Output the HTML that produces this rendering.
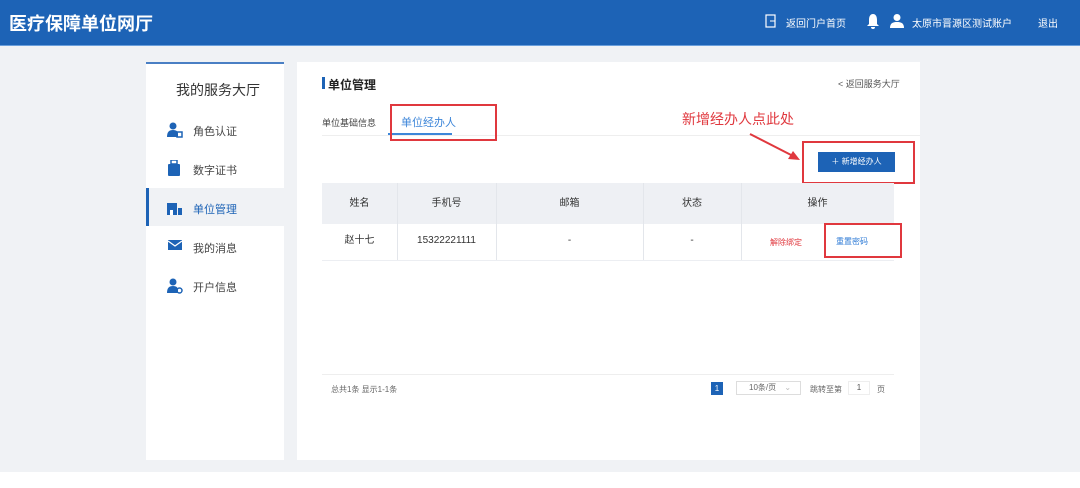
<!DOCTYPE html>
<html><head><meta charset="utf-8"><style>
*{margin:0;padding:0;box-sizing:border-box}
body{width:1080px;height:488px;background:#f0f2f5;font-family:"Liberation Sans","Noto Sans CJK SC",sans-serif;position:relative;overflow:hidden;color:#333}
.abs{position:absolute}
.hdr{left:0;top:0;width:1080px;height:46px;background:#1d63b6;border-bottom:1px solid #6a9fdc}
.t{white-space:nowrap}
.side{left:146px;top:62px;width:138px;height:398px;background:#fff;border-top:2px solid #4a7fc4}
.main{left:297px;top:62px;width:623px;height:398px;background:#fff}
.red{border:2px solid #e0383e}
.cell{position:absolute;font-size:10px;text-align:center;line-height:12px;height:12px}
</style></head><body>
<div class="abs hdr"></div>
<div class="abs t" style="left:9px;top:10px;font-size:18px;font-weight:bold;color:#fff">医疗保障单位网厅</div>
<svg class="abs" style="left:765px;top:14px" width="12" height="14"><rect x="1" y="1" width="9" height="12" fill="none" stroke="#fff" stroke-width="1.2"/><path d="M5 7h5" stroke="#fff"/></svg>
<div class="abs t" style="left:786px;top:15px;font-size:10px;color:#fff">返回门户首页</div>
<svg class="abs" style="left:866px;top:13px" width="14" height="16"><path d="M7 1C4 1 3 4 3 7v4L1 13h12l-2-2V7C11 4 10 1 7 1z M5 14a2 2 0 0 0 4 0z" fill="#fff"/></svg>
<svg class="abs" style="left:890px;top:13px" width="14" height="15"><circle cx="7" cy="4.5" r="3.5" fill="#fff"/><path d="M0 15c0-5 3-6 7-6s7 1 7 6z" fill="#fff"/></svg>
<div class="abs t" style="left:912px;top:15px;font-size:10px;color:#fff">太原市晋源区测试账户</div>
<div class="abs t" style="left:1038px;top:15px;font-size:10px;color:#fff">退出</div>

<div class="abs side"></div>
<div class="abs t" style="left:176px;top:80px;font-size:14px;color:#333">我的服务大厅</div>
<div class="abs" style="left:146px;top:188px;width:138px;height:38px;background:#f0f2f5;border-left:3px solid #1d63b6"></div>
<svg class="abs" style="left:167px;top:122px" width="16" height="16"><circle cx="6" cy="4" r="3.5" fill="#1d63b6"/><path d="M0 15c0-5 2-7 6-7s5 2 5 4v3z" fill="#1d63b6"/><rect x="10" y="10" width="5" height="5" fill="none" stroke="#1d63b6" stroke-width="1.5"/></svg>
<div class="abs t" style="left:193px;top:123px;font-size:11px;color:#444">角色认证</div>
<svg class="abs" style="left:168px;top:160px" width="12" height="16"><rect x="3" y="0" width="6" height="4" fill="none" stroke="#1d63b6" stroke-width="1.5"/><rect x="0" y="4" width="12" height="12" rx="1" fill="#1d63b6"/></svg>
<div class="abs t" style="left:193px;top:162px;font-size:11px;color:#444">数字证书</div>
<svg class="abs" style="left:167px;top:201px" width="16" height="14"><rect x="0" y="2" width="10" height="12" fill="#1d63b6"/><rect x="11" y="7" width="4" height="7" fill="#1d63b6"/><rect x="3" y="9" width="3" height="5" fill="#fff"/></svg>
<div class="abs t" style="left:193px;top:201px;font-size:11px;color:#1d63b6">单位管理</div>
<svg class="abs" style="left:168px;top:240px" width="14" height="10"><rect width="14" height="10" fill="#1d63b6"/><path d="M0 1l7 5 7-5" stroke="#fff" fill="none" stroke-width="1.3"/></svg>
<div class="abs t" style="left:193px;top:240px;font-size:11px;color:#444">我的消息</div>
<svg class="abs" style="left:167px;top:278px" width="16" height="16"><circle cx="6" cy="4" r="3.5" fill="#1d63b6"/><path d="M0 15c0-5 2-7 6-7s5 2 5 4v3z" fill="#1d63b6"/><circle cx="12.5" cy="12.5" r="2.5" fill="none" stroke="#1d63b6" stroke-width="1.5"/></svg>
<div class="abs t" style="left:193px;top:279px;font-size:11px;color:#444">开户信息</div>

<div class="abs main"></div>
<div class="abs" style="left:322px;top:77px;width:3px;height:12px;background:#1d63b6"></div>
<div class="abs t" style="left:328px;top:76px;font-size:12px;font-weight:bold;color:#222">单位管理</div>
<div class="abs t" style="left:838px;top:77px;font-size:9px;color:#555">&lt; 返回服务大厅</div>
<div class="abs" style="left:322px;top:135px;width:598px;height:1px;background:#eee"></div>
<div class="abs t" style="left:322px;top:116px;font-size:9px;color:#444">单位基础信息</div>
<div class="abs t" style="left:401px;top:114px;font-size:11px;color:#3d86d9">单位经办人</div>
<div class="abs" style="left:388px;top:133px;width:64px;height:2px;background:#3d86d9"></div>
<div class="abs red" style="left:390px;top:104px;width:107px;height:37px"></div>
<div class="abs t" style="left:682px;top:109px;font-size:14px;color:#e0383e">新增经办人点此处</div>
<svg class="abs" style="left:748px;top:132px" width="54" height="30"><path d="M2 2L47 25" stroke="#e0383e" stroke-width="2"/><path d="M52 28L40 27L45 19z" fill="#e0383e"/></svg>
<div class="abs red" style="left:802px;top:141px;width:113px;height:43px"></div>
<div class="abs t" style="left:818px;top:152px;width:77px;height:20px;background:#1d63b6;color:#fff;font-size:8px;text-align:center;line-height:20px">＋ 新增经办人</div>

<div class="abs" style="left:322px;top:183px;width:572px;height:41px;background:#eef0f4"></div>
<div class="abs" style="left:322px;top:260px;width:572px;height:1px;background:#eceef2"></div>
<div class="abs" style="left:397px;top:183px;width:1px;height:77px;background:#e3e6eb"></div>
<div class="abs" style="left:496px;top:183px;width:1px;height:77px;background:#e3e6eb"></div>
<div class="abs" style="left:643px;top:183px;width:1px;height:77px;background:#e3e6eb"></div>
<div class="abs" style="left:741px;top:183px;width:1px;height:77px;background:#e3e6eb"></div>
<div class="cell" style="left:322px;width:75px;top:198px">姓名</div>
<div class="cell" style="left:397px;width:99px;top:198px">手机号</div>
<div class="cell" style="left:496px;width:147px;top:198px">邮箱</div>
<div class="cell" style="left:643px;width:98px;top:198px">状态</div>
<div class="cell" style="left:741px;width:153px;top:198px">操作</div>
<div class="cell" style="left:322px;width:75px;top:235px">赵十七</div>
<div class="cell" style="left:397px;width:99px;top:235px">15322221111</div>
<div class="cell" style="left:496px;width:147px;top:235px">-</div>
<div class="cell" style="left:643px;width:98px;top:235px">-</div>
<div class="abs t" style="left:770px;top:237px;font-size:8px;color:#e0383e">解除绑定</div>
<div class="abs t" style="left:836px;top:236px;font-size:8px;color:#2c7ad6">重置密码</div>
<div class="abs red" style="left:824px;top:223px;width:78px;height:35px"></div>

<div class="abs" style="left:322px;top:374px;width:572px;height:1px;background:#eee"></div>
<div class="abs t" style="left:331px;top:384px;font-size:8px;color:#666">总共1条 显示1-1条</div>
<div class="abs" style="left:711px;top:382px;width:12px;height:13px;background:#1d63b6;color:#fff;font-size:8px;text-align:center;line-height:13px">1</div>
<div class="abs t" style="left:736px;top:381px;width:65px;height:14px;border:1px solid #ddd;font-size:8px;color:#666;padding-left:12px;line-height:12px">10条/页 <span style="color:#bbb;margin-left:6px">⌄</span></div>
<div class="abs t" style="left:810px;top:384px;font-size:8px;color:#666">跳转至第</div>
<div class="abs t" style="left:848px;top:381px;width:22px;height:14px;border:1px solid #eee;font-size:8px;text-align:center;line-height:12px;color:#555">1</div>
<div class="abs t" style="left:877px;top:384px;font-size:8px;color:#666">页</div>

<div class="abs" style="left:0;top:472px;width:1080px;height:16px;background:#fff"></div>
</body></html>
